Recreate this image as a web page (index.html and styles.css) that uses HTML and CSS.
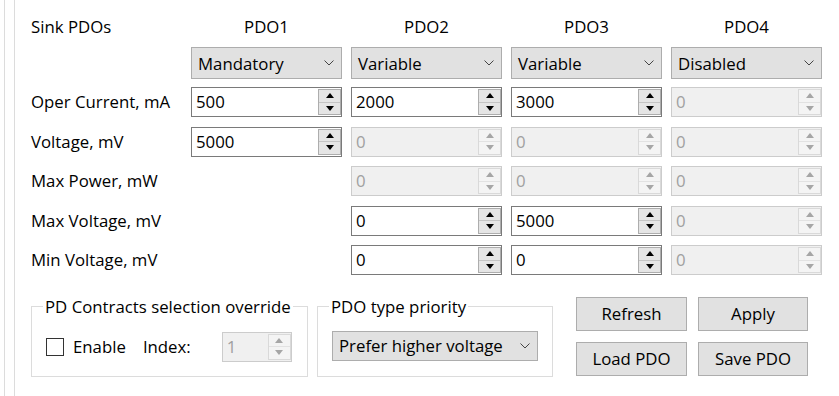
FILE: index.html
```html
<!DOCTYPE html>
<html>

<head>
  <title>Sink PDOs</title>
  <link rel="stylesheet" href="styles.css">
</head>

<body>
  <div class="frame">
    <div class="panel">
      <div class="pdoGrid">
        <span class="rowLabel">Sink PDOs</span>
        <span class="colHead">PDO1</span>
        <span class="colHead">PDO2</span>
        <span class="colHead">PDO3</span>
        <span class="colHead">PDO4</span>

        <span></span>
        <div class="combo"><span>Mandatory</span><svg width="10" height="6" viewBox="0 0 10 6"><polyline points="0.5,0.5 5,5 9.5,0.5" /></svg></div>
        <div class="combo"><span>Variable</span><svg width="10" height="6" viewBox="0 0 10 6"><polyline points="0.5,0.5 5,5 9.5,0.5" /></svg></div>
        <div class="combo"><span>Variable</span><svg width="10" height="6" viewBox="0 0 10 6"><polyline points="0.5,0.5 5,5 9.5,0.5" /></svg></div>
        <div class="combo"><span>Disabled</span><svg width="10" height="6" viewBox="0 0 10 6"><polyline points="0.5,0.5 5,5 9.5,0.5" /></svg></div>

        <span class="rowLabel">Oper Current, mA</span>
        <div class="spin"><span class="spinValue">500</span><span class="spinButtons"><span class="up"></span><span class="down"></span></span></div>
        <div class="spin"><span class="spinValue">2000</span><span class="spinButtons"><span class="up"></span><span class="down"></span></span></div>
        <div class="spin"><span class="spinValue">3000</span><span class="spinButtons"><span class="up"></span><span class="down"></span></span></div>
        <div class="spin disabled"><span class="spinValue">0</span><span class="spinButtons"><span class="up"></span><span class="down"></span></span></div>

        <span class="rowLabel">Voltage, mV</span>
        <div class="spin"><span class="spinValue">5000</span><span class="spinButtons"><span class="up"></span><span class="down"></span></span></div>
        <div class="spin disabled"><span class="spinValue">0</span><span class="spinButtons"><span class="up"></span><span class="down"></span></span></div>
        <div class="spin disabled"><span class="spinValue">0</span><span class="spinButtons"><span class="up"></span><span class="down"></span></span></div>
        <div class="spin disabled"><span class="spinValue">0</span><span class="spinButtons"><span class="up"></span><span class="down"></span></span></div>

        <span class="rowLabel">Max Power, mW</span>
        <span></span>
        <div class="spin disabled"><span class="spinValue">0</span><span class="spinButtons"><span class="up"></span><span class="down"></span></span></div>
        <div class="spin disabled"><span class="spinValue">0</span><span class="spinButtons"><span class="up"></span><span class="down"></span></span></div>
        <div class="spin disabled"><span class="spinValue">0</span><span class="spinButtons"><span class="up"></span><span class="down"></span></span></div>

        <span class="rowLabel">Max Voltage, mV</span>
        <span></span>
        <div class="spin"><span class="spinValue">0</span><span class="spinButtons"><span class="up"></span><span class="down"></span></span></div>
        <div class="spin"><span class="spinValue">5000</span><span class="spinButtons"><span class="up"></span><span class="down"></span></span></div>
        <div class="spin disabled"><span class="spinValue">0</span><span class="spinButtons"><span class="up"></span><span class="down"></span></span></div>

        <span class="rowLabel">Min Voltage, mV</span>
        <span></span>
        <div class="spin"><span class="spinValue">0</span><span class="spinButtons"><span class="up"></span><span class="down"></span></span></div>
        <div class="spin"><span class="spinValue">0</span><span class="spinButtons"><span class="up"></span><span class="down"></span></span></div>
        <div class="spin disabled"><span class="spinValue">0</span><span class="spinButtons"><span class="up"></span><span class="down"></span></span></div>
      </div>

      <div class="bottom">
        <fieldset class="group overrideGroup">
          <legend>PD Contracts selection override</legend>
          <div class="groupRow">
            <span class="checkbox"></span>
            <span class="enableLabel">Enable</span>
            <span class="indexLabel">Index:</span>
            <div class="spin disabled indexSpin"><span class="spinValue">1</span><span class="spinButtons"><span class="up"></span><span class="down"></span></span></div>
          </div>
        </fieldset>

        <fieldset class="group priorityGroup">
          <legend>PDO type priority</legend>
          <div class="combo priorityCombo"><span>Prefer higher voltage</span><svg width="10" height="6" viewBox="0 0 10 6"><polyline points="0.5,0.5 5,5 9.5,0.5" /></svg></div>
        </fieldset>

        <div class="actions">
          <button>Refresh</button>
          <button>Apply</button>
          <button>Load PDO</button>
          <button>Save PDO</button>
        </div>
      </div>
    </div>
  </div>
</body>

</html>
```

FILE: styles.css
```css
body {
  margin: 0;
  background: #fff;
  color: #000;
  font-family: "Open Sans", "Noto Sans", sans-serif;
  font-size: 16.8px;
  overflow: hidden;
}

/* the two thin window edges on the left */
.frame {
  margin-left: 4px;
  border-left: 1px solid #dcdcdc;
  min-height: 100vh;
}

.panel {
  margin-left: 9px;
  border-left: 1px solid #dcdcdc;
  padding-left: 16px;
  min-height: 100vh;
}

.pdoGrid {
  display: grid;
  grid-template-columns: 151px repeat(4, 151px);
  grid-template-rows: 33px 40px repeat(5, 39.5px);
  column-gap: 9px;
  align-items: start;
  padding-top: 14px;
}

.rowLabel,
.colHead {
  line-height: 26px;
  white-space: nowrap;
}

.pdoGrid>.rowLabel {
  line-height: 30px;
}

.pdoGrid>.rowLabel:first-child {
  line-height: 26px;
}

.colHead {
  text-align: center;
}

.combo {
  height: 32px;
  box-sizing: border-box;
  background: #e1e1e1;
  border: 1px solid #adadad;
  display: flex;
  align-items: center;
  justify-content: space-between;
  padding: 0 7px 0 6px;
  white-space: nowrap;
}

.combo svg {
  fill: none;
  stroke: #444;
  stroke-width: 1;
}

.spin {
  height: 30px;
  box-sizing: border-box;
  border: 1px solid #7a7a7a;
  background: #fff;
  display: flex;
}

.spinValue {
  flex-grow: 1;
  padding-left: 4px;
  line-height: 28px;
}

.spinButtons {
  width: 23px;
  display: flex;
  flex-direction: column;
  border: 1px solid #adadad;
  margin: 1px 0 0;
  height: 26px;
  box-sizing: border-box;
}

.spinButtons>span {
  flex: 1;
  display: flex;
  align-items: center;
  justify-content: center;
  background: #e5e5e5;
}

.spinButtons>.up {
  border-bottom: 1px solid #c4c4c4;
}

.up::before,
.down::before {
  content: "";
  border-left: 4.5px solid transparent;
  border-right: 4.5px solid transparent;
}

.up::before {
  border-bottom: 5px solid #000;
}

.down::before {
  border-top: 5px solid #000;
}

.spin.disabled {
  border-color: #cccccc;
  background: #f0f0f0;
  color: #a0a0a0;
}

.spin.disabled .spinButtons {
  border-color: #d9d9d9;
}

.spin.disabled .spinButtons>span {
  background: #f4f4f4;
}

.spin.disabled .up {
  border-bottom-color: #e2e2e2;
}

.spin.disabled .up::before {
  border-bottom-color: #a6a6a6;
}

.spin.disabled .down::before {
  border-top-color: #a6a6a6;
}

.bottom {
  display: flex;
  align-items: flex-start;
  margin-top: 11px;
}

.group {
  margin: 0;
  border: 1px solid #dcdcdc;
  padding: 14px;
  box-sizing: border-box;
  min-width: 0;
}

.group>legend {
  padding: 0 2px;
  margin-left: -3px;
  line-height: 22px;
  white-space: nowrap;
}

.overrideGroup {
  width: 277px;
  height: 81px;
}

.priorityGroup {
  width: 236px;
  height: 81px;
  margin-left: 9px;
}

.groupRow {
  display: flex;
  align-items: center;
  height: 30px;
}

.checkbox {
  width: 18px;
  height: 18px;
  box-sizing: border-box;
  border: 1px solid #333;
  background: #fff;
}

.enableLabel {
  margin-left: 9px;
}

.indexLabel {
  margin-left: 17px;
}

.indexSpin {
  width: 70px;
  margin-left: 31px;
}

.priorityCombo {
  height: 30px;
  width: 206px;
  margin-top: -1px;
}

.actions {
  display: grid;
  grid-template-columns: 111px 110px;
  grid-auto-rows: 34px;
  gap: 11px;
  margin-left: 23px;
  margin-top: 1px;
}

.actions>button {
  font: inherit;
  color: #000;
  background: #e1e1e1;
  border: 1px solid #adadad;
  padding: 0;
  border-radius: 0;
}
```
